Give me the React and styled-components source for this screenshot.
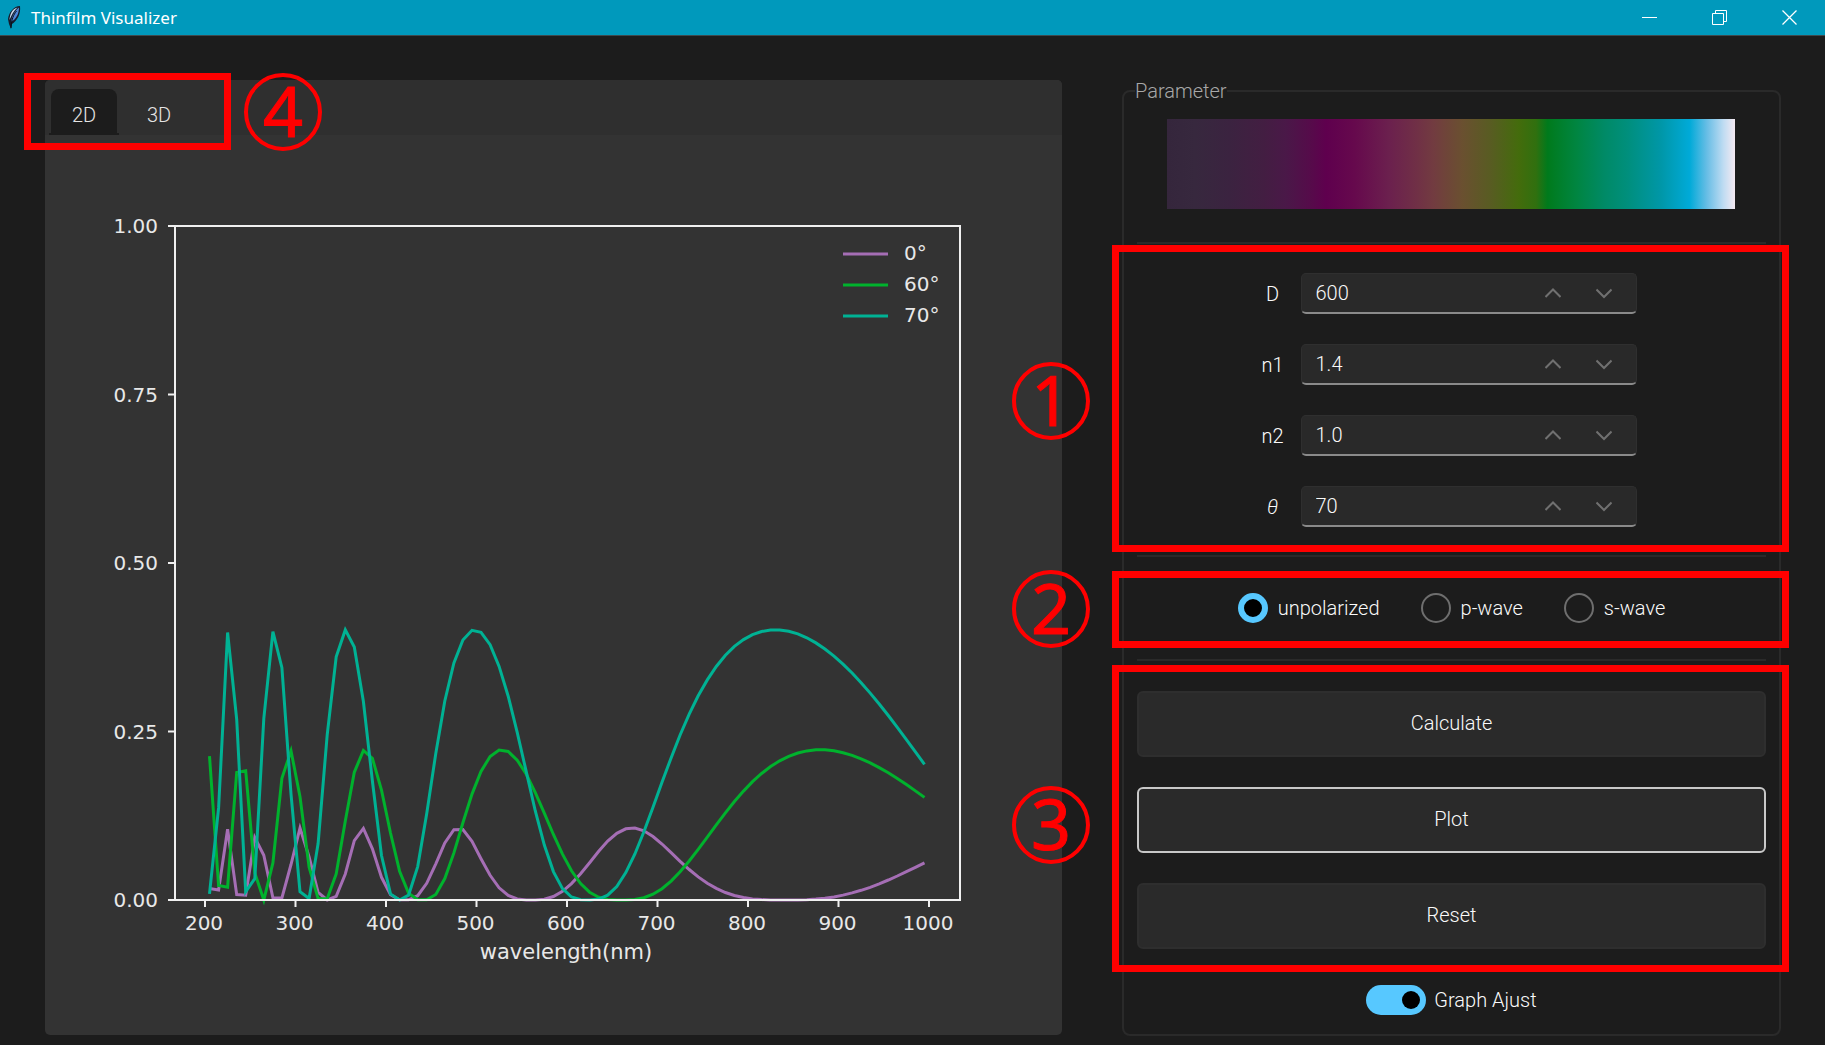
import React, { useState } from "react";
import styled, { createGlobalStyle } from "styled-components";

const GlobalStyle = createGlobalStyle`
  *, *::before, *::after { box-sizing: border-box; }
  body { margin: 0; background: #1c1c1c; }
  button, input { font: inherit; color: inherit; }
`;

const Window = styled.div`
  min-height: 100vh;
  display: flex;
  flex-direction: column;
  background: #1c1c1c;
  color: #fafafa;
  font: 300 20px/24px Roboto, "Liberation Sans", sans-serif;
`;

const TitleBar = styled.header`
  display: flex;
  align-items: center;
  height: 36px;
  padding-left: 6px;
  background: #0099bc;
  border-bottom: 1px solid #3c4a4e;
  color: #fff;
`;

const Title = styled.h1`
  flex: 1;
  margin: 0 0 0 9px;
  font: 400 17px/24px "Noto Sans", "Open Sans", sans-serif;
`;

const WindowButton = styled.button`
  width: 70px;
  height: 35px;
  padding: 0;
  display: grid;
  place-items: center;
  border: 0;
  background: none;
`;

const Main = styled.main`
  flex: 1;
  display: grid;
  grid-template-columns: 1017fr 659fr;
  align-items: start;
  gap: 60px;
  padding: 43px 44px 10px 45px;
`;

const Notebook = styled.section`
  position: relative;
  margin-top: 1px;
  background: #333333;
  border-radius: 5px;
`;

const TabStrip = styled.div`
  display: flex;
  gap: 9px;
  height: 55px;
  padding: 9px 6px 0;
  background: #2f2f2f;
  border-radius: 5px 5px 0 0;
`;

const Tab = styled.button`
  position: relative;
  width: 66px;
  height: 46px;
  padding: 5px 0 0;
  border: 0;
  border-radius: 8px 8px 0 0;
  background: ${(p) => (p.$active ? "#1c1c1c" : "transparent")};
  color: #e4e4e4;

  &::after {
    content: "";
    display: ${(p) => (p.$active ? "block" : "none")};
    position: absolute;
    inset: auto -2px 0;
    height: 2px;
    background: #1c1c1c;
  }
`;

const Chart = styled.svg`
  display: block;
  width: 100%;
  height: auto;
  font: 20px "DejaVu Sans", sans-serif;
  fill: #e8e8e8;
`;

const AxisTitle = styled.text`
  font-size: 21px;
`;

const Frame = styled.fieldset`
  min-width: 0;
  margin: 0;
  padding: 16px 13px 19px;
  border: 2px solid #2a2a2a;
  border-radius: 8px;
`;

const Legend = styled.legend`
  margin-left: -2px;
  padding: 0;
  color: #a8a8a8;
`;

const Spectrum = styled.div`
  height: 90px;
  margin: 0 31px 33px 30px;
  background: linear-gradient(
    90deg,
    #35263c 0%, #37283e 5%, #3b2340 11%, #431e42 17%, #4a1848 21%, #550c4a 25%,
    #5f004e 28%, #66094d 33%, #6b204e 39%, #703046 44%, #723c40 47%, #6a5030 52%,
    #585c22 57%, #436c0c 62%, #30700f 65%, #007a1c 67%, #008540 72%, #008a66 77%,
    #008f7c 81%, #0097a8 87%, #00aad8 92%, #66bde5 95%, #c0dcf2 98%, #f5eaf2 100%
  );
`;

const Section = styled.div`
  position: relative;
  display: flex;
  flex-direction: ${(p) => (p.$row ? "row" : "column")};
  align-items: ${(p) => (p.$stretch ? "stretch" : "center")};
  justify-content: center;
  gap: ${(p) => p.$gap}px;
  padding: ${(p) => p.$pad};
  border-top: 2px solid #2a2a2a;
`;

const Field = styled.div`
  display: grid;
  grid-template-columns: 56px 336px;
  align-items: center;
  margin-right: 22px;
`;

const FieldLabel = styled.label`
  text-align: center;
  font-style: ${(p) => (p.$italic ? "italic" : "normal")};
`;

const SpinBox = styled.div`
  display: flex;
  align-items: center;
  height: 41px;
  padding: 0 6px 0 14px;
  background: #292929;
  border: 1px solid #2f2f2f;
  border-bottom: 2px solid #8a8a8a;
  border-radius: 5px;
`;

const SpinInput = styled.input`
  flex: 1;
  min-width: 0;
  padding: 0;
  border: 0;
  outline: 0;
  background: none;
`;

const SpinButton = styled.button`
  width: 51px;
  height: 36px;
  padding: 0;
  display: grid;
  place-items: center;
  border: 0;
  background: none;
`;

const RadioLabel = styled.label`
  display: flex;
  align-items: center;
  gap: 10px;
`;

const Radio = styled.input`
  appearance: none;
  width: 30px;
  height: 30px;
  margin: 0;
  border: 2px solid #6e6e6e;
  border-radius: 50%;

  &:checked {
    border: 6px solid #57c8ff;
    background: #000;
  }
`;

const ActionButton = styled.button`
  height: 66px;
  padding: 0 0 2px;
  border: ${(p) => (p.$focused ? "2px solid #c8c8c8" : "2px solid #2e2e2e")};
  border-radius: 6px;
  background: #2a2a2a;
`;

const SwitchLabel = styled.label`
  display: flex;
  align-items: center;
  justify-content: center;
  gap: 8px;
`;

const Switch = styled.input`
  appearance: none;
  width: 60px;
  height: 30px;
  margin: 0;
  padding: 6px;
  display: flex;
  justify-content: ${(p) => (p.checked ? "flex-end" : "flex-start")};
  border-radius: 15px;
  background: ${(p) => (p.checked ? "#57c8ff" : "#444")};

  &::before {
    content: "";
    width: 18px;
    height: 18px;
    border-radius: 50%;
    background: #000;
  }
`;

const Callout = styled.div`
  position: absolute;
  inset: ${(p) => p.$inset};
  border: 7px solid #f00;
  pointer-events: none;
`;

const TabCallout = styled(Callout)`
  width: 207px;
  height: 77px;
`;

const CalloutNumber = styled.span`
  position: absolute;
  top: ${(p) => p.$top}px;
  left: ${(p) => p.$left}px;
  width: 78px;
  height: 78px;
  border: 4px solid #f00;
  border-radius: 50%;
  color: #f00;
  font: 400 70px/66px "Noto Sans", "Open Sans", sans-serif;
  -webkit-text-stroke: 1px #f00;
  text-align: center;
`;

const FIELDS = [
  { id: "D", value: "600", step: 10 },
  { id: "n1", value: "1.4", step: 0.1 },
  { id: "n2", value: "1.0", step: 0.1 },
  { id: "θ", value: "70", step: 1, italic: true },
];

const WAVES = ["unpolarized", "p-wave", "s-wave"];
const ACTIONS = ["Calculate", "Plot", "Reset"];

const SERIES = [
  { label: "0°", color: "#a56eb5", path: 840, peak: 0.107, k: -0.2 },
  { label: "60°", color: "#00b22d", path: 660, peak: 0.223, k: 0.286 },
  { label: "70°", color: "#00b294", path: 622.7, peak: 0.401, k: 0.8 },
];

const AXIS = { left: 130, right: 915, top: 91, bottom: 765 };
const xOf = (nm) => 160 + ((nm - 200) * 724) / 800;
const yOf = (v) => AXIS.bottom - v * (AXIS.bottom - AXIS.top);

function curvePoints({ path, peak, k }) {
  const points = [];
  for (let nm = 205; nm <= 995; nm += 10) {
    const s = Math.abs(Math.sin((2 * Math.PI * path) / nm)) ** 3;
    const v = (peak * (1 + k) * s) / (1 + k * s);
    points.push(`${xOf(nm).toFixed(1)},${yOf(v).toFixed(1)}`);
  }
  return points.join(" ");
}

const X_TICKS = [200, 300, 400, 500, 600, 700, 800, 900, 1000];
const Y_TICKS = [0, 0.25, 0.5, 0.75, 1];

function ReflectanceChart() {
  return (
    <Chart viewBox="0 0 1017 900" role="img" aria-label="Reflectance by wavelength">
      {SERIES.map((s) => (
        <polyline key={s.label} points={curvePoints(s)} fill="none" stroke={s.color} strokeWidth="3" />
      ))}
      <g stroke="#f0f0f0" strokeWidth="2" fill="none">
        <rect x={AXIS.left} y={AXIS.top} width={AXIS.right - AXIS.left} height={AXIS.bottom - AXIS.top} />
        {Y_TICKS.map((v) => (
          <line key={v} x1={AXIS.left - 7} x2={AXIS.left} y1={yOf(v)} y2={yOf(v)} />
        ))}
        {X_TICKS.map((nm) => (
          <line key={nm} x1={xOf(nm)} x2={xOf(nm)} y1={AXIS.bottom} y2={AXIS.bottom + 7} />
        ))}
      </g>
      {Y_TICKS.map((v) => (
        <text key={v} x={AXIS.left - 17} y={yOf(v) + 7} textAnchor="end">{v.toFixed(2)}</text>
      ))}
      {X_TICKS.map((nm) => (
        <text key={nm} x={xOf(nm) - 1} y="795" textAnchor="middle">{nm}</text>
      ))}
      <AxisTitle x="521" y="824" textAnchor="middle">wavelength(nm)</AxisTitle>
      {SERIES.map((s, i) => (
        <g key={s.label}>
          <line x1="798" x2="843" y1={119 + i * 31} y2={119 + i * 31} stroke={s.color} strokeWidth="3" />
          <text x="859" y={125 + i * 31}>{s.label}</text>
        </g>
      ))}
    </Chart>
  );
}

function FeatherIcon() {
  return (
    <svg width="16" height="26" viewBox="0 0 16 26" aria-hidden="true">
      <path d="M14 1C8 1 3 7 2 14l1 5 2 5 1-5c5-3 9-10 8-18z" fill="#131c2e" />
      <path d="M13 2.500C9 6 6 10 5 17c5-3 8-8 8-14.500z" fill="#4f86d8" />
      <path d="M11.500 2.500C6 4 4 9 3.500 15c2-5 4-9 8-12.500z" fill="#c8d8ea" />
      <path d="M10.500 6C7.500 10 5.500 14 5 23" fill="none" stroke="#0b0f18" strokeWidth="1" />
    </svg>
  );
}

const Glyph = ({ d, color = "#fff", width = 1 }) => (
  <svg width="16" height="16" viewBox="0 0 16 16" fill="none" stroke={color} strokeWidth={width} aria-hidden="true">
    <path d={d} />
  </svg>
);

function ParameterField({ field }) {
  const [value, setValue] = useState(field.value);
  const digits = field.step < 1 ? 1 : 0;
  const bump = (dir) => setValue((Number(value) + dir * field.step).toFixed(digits));
  return (
    <Field>
      <FieldLabel htmlFor={field.id} $italic={field.italic}>{field.id}</FieldLabel>
      <SpinBox>
        <SpinInput id={field.id} value={value} onChange={(e) => setValue(e.target.value)} />
        <SpinButton type="button" aria-label={`Increase ${field.id}`} onClick={() => bump(1)}>
          <Glyph d="M0.500 12L8 4.500L15.500 12" color="#707070" width={2} />
        </SpinButton>
        <SpinButton type="button" aria-label={`Decrease ${field.id}`} onClick={() => bump(-1)}>
          <Glyph d="M0.500 4.500L8 12L15.500 4.500" color="#707070" width={2} />
        </SpinButton>
      </SpinBox>
    </Field>
  );
}

export default function App() {
  const [tab, setTab] = useState("2D");
  const [wave, setWave] = useState(WAVES[0]);
  const [adjust, setAdjust] = useState(true);

  return (
    <Window>
      <GlobalStyle />
      <TitleBar>
        <FeatherIcon />
        <Title>Thinfilm Visualizer</Title>
        <WindowButton aria-label="Minimize"><Glyph d="M0 7.500H15" /></WindowButton>
        <WindowButton aria-label="Restore"><Glyph d="M0.500 3.500H11.500V14.500H0.500ZM3.500 3.500V0.500H14.500V11.500H11.500" /></WindowButton>
        <WindowButton aria-label="Close"><Glyph d="M0.500 0.500L14.500 14.500M14.500 0.500L0.500 14.500" width={1.25} /></WindowButton>
      </TitleBar>
      <Main>
        <Notebook>
          <TabStrip>
            {["2D", "3D"].map((name) => (
              <Tab key={name} type="button" $active={tab === name} onClick={() => setTab(name)}>{name}</Tab>
            ))}
          </TabStrip>
          <ReflectanceChart />
          <TabCallout $inset="-7px auto auto -21px">
            <CalloutNumber $top={-7} $left={213}>4</CalloutNumber>
          </TabCallout>
        </Notebook>
        <Frame>
          <Legend>Parameter</Legend>
          <Spectrum />
          <Section $gap={30} $pad="29px 0 28px">
            {FIELDS.map((f) => <ParameterField key={f.id} field={f} />)}
            <Callout $inset="1px -23px 3px -25px">
              <CalloutNumber $top={110} $left={-107}>1</CalloutNumber>
            </Callout>
          </Section>
          <Section $row $gap={41} $pad="36px 0">
            {WAVES.map((w) => (
              <RadioLabel key={w}>
                <Radio type="radio" name="wave" checked={wave === w} onChange={() => setWave(w)} />
                {w}
              </RadioLabel>
            ))}
            <Callout $inset="14px -23px 11px -25px">
              <CalloutNumber $top={-8} $left={-107}>2</CalloutNumber>
            </Callout>
          </Section>
          <Section $stretch $gap={30} $pad="30px 0 36px">
            {ACTIONS.map((a) => <ActionButton key={a} type="button" $focused={a === "Plot"}>{a}</ActionButton>)}
            <Callout $inset="4px -23px 13px -25px">
              <CalloutNumber $top={114} $left={-107}>3</CalloutNumber>
            </Callout>
          </Section>
          <SwitchLabel>
            <Switch type="checkbox" role="switch" checked={adjust} onChange={(e) => setAdjust(e.target.checked)} />
            Graph Ajust
          </SwitchLabel>
        </Frame>
      </Main>
    </Window>
  );
}
